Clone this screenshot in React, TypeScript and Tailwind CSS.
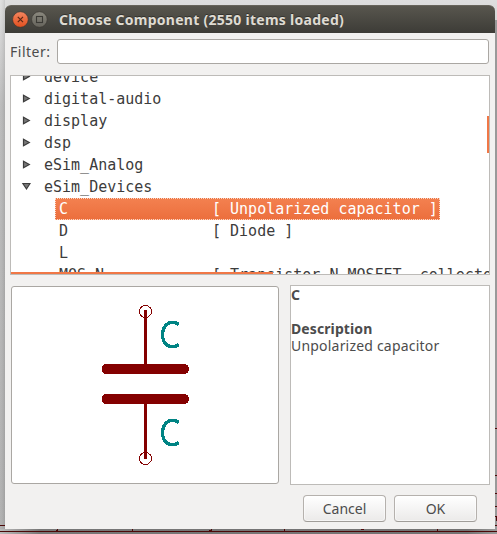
import React from 'react';

const libraries = ['device', 'digital-audio', 'display', 'dsp', 'eSim_Analog', 'eSim_Devices'];

const parts = [
  { name: 'C', detail: '[ Unpolarized capacitor ]', selected: true },
  { name: 'D', detail: '[ Diode ]' },
  { name: 'L', detail: '' },
  { name: 'MOS_N', detail: '[ Transistor N-MOSFET, collector' },
];

function Arrow({ open }: { open: boolean }) {
  return (
    <svg width="10" height="10" viewBox="0 0 10 10" className="shrink-0">
      <path
        d={open ? 'M1.9 1.5 H9 L5.5 7 Z' : 'M2.5 1.3 V7.7 L8.3 4.5 Z'}
        fill="#777"
        stroke="#3c3c3c"
        strokeWidth="1.2"
      />
    </svg>
  );
}

function TitleBar() {
  return (
    <div className="flex h-7 shrink-0 items-center rounded-t-[6px] border-t border-[#67645b] bg-linear-to-b from-[#58564e] to-[#3d3c37] pl-[7px]">
      <svg width="36" height="18" viewBox="0 0 36 18" className="shrink-0">
        <defs>
          <linearGradient id="close" x1="0" y1="0" x2="0" y2="1">
            <stop offset="0" stopColor="#f58660" />
            <stop offset="1" stopColor="#e2501f" />
          </linearGradient>
          <linearGradient id="max" x1="0" y1="0" x2="0" y2="1">
            <stop offset="0" stopColor="#8b897f" />
            <stop offset="1" stopColor="#65635b" />
          </linearGradient>
        </defs>
        <circle cx="8.4" cy="8.5" r="7.8" fill="url(#close)" stroke="#35332e" strokeWidth="0.6" />
        <path d="M5.8 5.9 L11 11.1 M11 5.9 L5.8 11.1" stroke="#5a2714" strokeWidth="1.2" />
        <circle cx="27.4" cy="8.5" r="7.8" fill="url(#max)" stroke="#35332e" strokeWidth="0.6" />
        <rect x="24.5" y="5.5" width="6" height="6" fill="none" stroke="#3b3a35" strokeWidth="1.1" />
      </svg>
      <span className="ml-[11px] whitespace-nowrap font-['Noto_Sans',sans-serif] text-[14px] leading-[20px] font-bold tracking-[0.27px] text-[#dfdbd2] [text-shadow:0_-1px_#33322e]">
        Choose Component (2550 items loaded)
      </span>
    </div>
  );
}

function Tree() {
  return (
    <div className="relative mx-[5px] mt-[11px] h-[200px] shrink-0 overflow-hidden border border-[#bdbbb8] bg-white font-['DejaVu_Sans_Mono',monospace] text-[15px] leading-[22px] text-[#3c3c3c]">
      <div className="-mt-[10px]">
        {libraries.map((name) => (
          <div key={name} className="flex h-[22px] items-center pl-[10px]">
            <Arrow open={name === 'eSim_Devices'} />
            <span className="ml-[13px]">{name}</span>
          </div>
        ))}
        {parts.map((part) => (
          <div
            key={part.name}
            className={
              part.selected
                ? 'ml-[44px] flex h-[22px] w-[385px] border border-dotted border-[#fbd9ca] bg-linear-to-b from-[#f3804f] to-[#ec6f3d] pl-[3px] leading-[20px] text-white'
                : 'ml-[44px] flex h-[22px] pl-[4px]'
            }
          >
            <span className="w-[153px] shrink-0">{part.name}</span>
            <span className="whitespace-pre">{part.detail}</span>
          </div>
        ))}
      </div>
      <div className="absolute -right-px top-[40px] h-[37px] w-[3px] bg-[#f07746]" />
      <div className="absolute -bottom-px -left-px h-[3px] w-[263px] bg-[#f07746]" />
    </div>
  );
}

function Capacitor() {
  return (
    <svg width="266" height="196" viewBox="12 287 266 196" shapeRendering="crispEdges">
      <g fill="none" stroke="#840000">
        <circle cx="145.5" cy="311.5" r="6" />
        <circle cx="145.5" cy="458.5" r="6" />
        <path d="M145.5 310 V369 M145.5 399 V459" strokeWidth="3" />
        <path d="M106.5 369 H184 M106.5 399 H184" strokeWidth="10" strokeLinecap="round" />
      </g>
      <g fill="none" stroke="#008484" strokeWidth="3.3">
        <path d="M179 324.5 L175 322.5 H170 L166 325 L163.5 329 L162.5 333 V336 L163.5 341 L166 344.5 L170 346.5 H175 L179 344.5" />
        <path d="M179 422.5 L175 420.5 H170 L166 423 L163.5 427 L162.5 431 V434 L163.5 439 L166 442.5 L170 444.5 H175 L179 442.5" />
      </g>
    </svg>
  );
}

function Button({ label }: { label: string }) {
  return (
    <button className="h-[27px] w-[83px] rounded-[4px] border border-[#b5b1ad] border-b-[#a09d99] bg-linear-to-b from-white to-[#ebeae9] text-center leading-[25px] shadow-[inset_0_0_0_1px_#ffffff80]">
      {label}
    </button>
  );
}

export default function App() {
  return (
    <div className="relative h-[534px] w-[497px] overflow-hidden bg-linear-to-b from-[#dedede] via-[#b5b5b5] via-20% to-[#aaaaaa] pl-[5px] pt-[5px] font-['Noto_Sans',sans-serif] text-[14px] text-[#4c4c4c]">
      <svg className="absolute left-0 top-0" width="497" height="534" shapeRendering="crispEdges">
        <defs>
          <linearGradient id="leftShade">
            <stop offset="0" stopColor="#fff" stopOpacity="0.1" />
            <stop offset="1" stopColor="#777" stopOpacity="0.2" />
          </linearGradient>
          <linearGradient id="bottomShade">
            <stop offset="0" stopColor="#bbb" />
            <stop offset="0.08" stopColor="#777" />
            <stop offset="0.94" stopColor="#737373" />
            <stop offset="1" stopColor="#999" />
          </linearGradient>
        </defs>
        <rect width="5" height="534" fill="url(#leftShade)" />
        <rect x="495" y="20" width="2" height="509" fill="#999" />
        <rect y="529" width="497" height="5" fill="url(#bottomShade)" />
        <path
          d="M0 525.5 H5 M0 531.5 H497 M57.5 529 V531 M132.5 529 V532 M211.5 529 V531 M284.5 529 V531 M361 529.5 H364 M437.5 529 V531 M495 428.5 H497 M495 475.5 H497 M495 493.5 H497 M495 506.5 H497 M495 516.5 H497 M496.5 516 V521 M495 525.5 H497"
          stroke="#4d0808"
        />
        <path d="M56 530.5 H58 M209 530.5 H212" stroke="#4d0808" />
      </svg>

      <div className="relative flex h-[524px] w-[490px] flex-col rounded-t-[6px] bg-[#f2f1f0]">
        <TitleBar />
        <div className="mt-[6px] flex h-[25px] shrink-0 items-center pl-[5px]">
          <label htmlFor="filter" className="w-[47px] leading-[20px] tracking-[0.5px]">Filter:</label>
          <input
            id="filter"
            className="h-[25px] w-[432px] rounded-[3px] border border-[#aaa7a3] bg-white px-2 outline-none"
          />
        </div>
        <Tree />
        <div className="ml-[6px] mt-[10px] flex h-[200px] shrink-0 gap-[11px]">
          <div className="mt-px h-[198px] w-[268px] rounded-[3px] border border-[#aaa7a3] bg-white">
            <Capacitor />
          </div>
          <div className="h-[200px] w-[200px] border border-[#bdbbb8] bg-white leading-[17px]">
            <p className="font-bold">C</p>
            <p className="mt-[17px] font-bold tracking-[0.1px]">Description</p>
            <p className="tracking-[0.2px]">Unpolarized capacitor</p>
          </div>
        </div>
        <div className="mt-[10px] flex justify-end gap-2 pr-[18px]">
          <Button label="Cancel" />
          <Button label="OK" />
        </div>
      </div>
    </div>
  );
}
